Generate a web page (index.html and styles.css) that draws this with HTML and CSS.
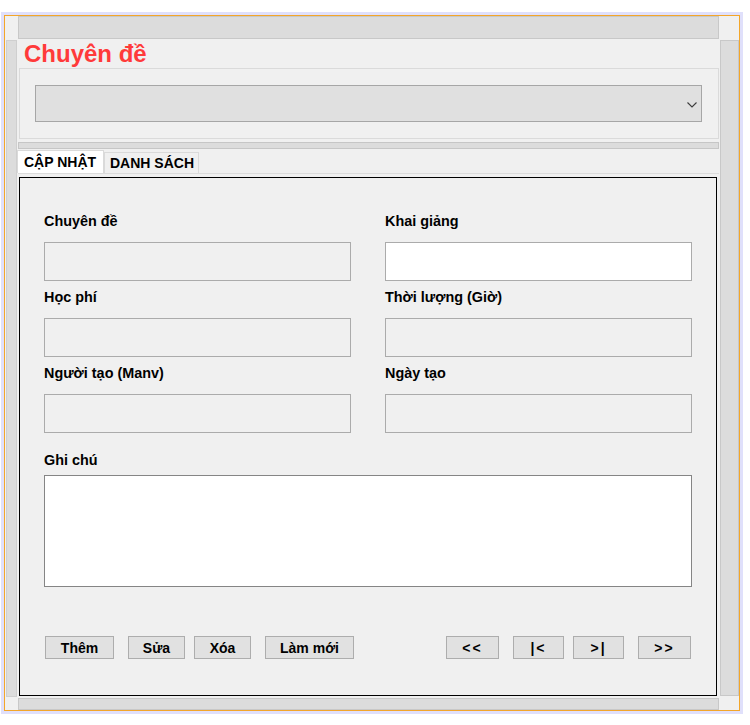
FILE: index.html
```html
<!DOCTYPE html>
<html lang="vi">
<head>
<meta charset="utf-8">
<title>Chuyên đề</title>
<link rel="stylesheet" href="styles.css">
</head>
<body>
<div class="frame">
  <div class="win">
    <div class="corner"></div>
    <div class="hbar top"></div>
    <div class="corner"></div>

    <div class="vstrip left"></div>
    <main class="main">
      <h1 class="title">Chuyên đề</h1>
      <div class="combo-panel">
        <div class="combo">
          <svg class="chev" width="10" height="6" viewBox="0 0 10 6"><polyline points="0.5,0.5 5,5 9.5,0.5" fill="none" stroke="#3c3c3c" stroke-width="1.1"/></svg>
        </div>
      </div>
      <div class="sep"></div>
      <div class="tabs">
        <div class="tab active">CẬP NHẬT</div>
        <div class="tab">DANH SÁCH</div>
      </div>
      <div class="tab-body">
        <div class="panel">
          <div class="grid">
            <div class="field">
              <label class="lbl">Chuyên đề</label>
              <div class="input"></div>
            </div>
            <div class="field">
              <label class="lbl">Khai giảng</label>
              <div class="input white"></div>
            </div>
            <div class="field">
              <label class="lbl">Học phí</label>
              <div class="input"></div>
            </div>
            <div class="field">
              <label class="lbl">Thời lượng (Giờ)</label>
              <div class="input"></div>
            </div>
            <div class="field">
              <label class="lbl">Người tạo (Manv)</label>
              <div class="input"></div>
            </div>
            <div class="field">
              <label class="lbl">Ngày tạo</label>
              <div class="input"></div>
            </div>
          </div>
          <label class="lbl note-lbl">Ghi chú</label>
          <div class="note"></div>
          <div class="buttons">
            <button class="btn b-them">Thêm</button>
            <button class="btn b-sua">Sửa</button>
            <button class="btn b-xoa">Xóa</button>
            <button class="btn b-moi">Làm mới</button>
            <button class="btn b-first">&lt;&lt;</button>
            <button class="btn b-prev">|&lt;</button>
            <button class="btn b-next">&gt;|</button>
            <button class="btn b-last">&gt;&gt;</button>
          </div>
        </div>
      </div>
    </main>
    <div class="vstrip right"></div>

    <div class="corner"></div>
    <div class="hbar bottom"></div>
    <div class="corner"></div>
  </div>
</div>
</body>
</html>
```

FILE: styles.css
```css
* { box-sizing: border-box; }

body {
  margin: 0;
  background: #ffffff;
  font-family: "Liberation Sans", Arial, sans-serif;
  color: #000;
}

.frame {
  margin: 12px 0 0 1px;
  width: 742px;
  height: 702px;
  padding: 3px;
  background: #e0e0fb;
}

.win {
  width: 736px;
  height: 696px;
  border: 1px solid #f3a62a;
  background: #f0f0f0;
  display: grid;
  grid-template-columns: 13px 702px 19px;
  grid-template-rows: 24px 658px 12px;
}

.corner { background: #f0f0f0; }

.hbar {
  width: 701px;
  background: #dcdcdc;
  border: 1px solid #c8c8c8;
}
.hbar.top { height: 23px; }
.hbar.bottom { height: 12px; }

.vstrip {
  background: #dcdcdc;
  border: 1px solid #cfcfcf;
}
.vstrip.left { margin-left: 1px; width: 11px; height: 657px; }
.vstrip.right { width: 19px; height: 656px; border-color: #c8c8c8; }

.main {
  display: flex;
  flex-direction: column;
  min-width: 0;
}

.title {
  margin: 0;
  height: 28px;
  padding-left: 6px;
  font-size: 24px;
  line-height: 28px;
  font-weight: bold;
  color: #ff3a3a;
}

.combo-panel {
  margin-left: 1px;
  width: 700px;
  height: 71px;
  border: 1px solid #dadada;
  padding: 16px 0 0 15px;
}

.combo {
  width: 667px;
  height: 37px;
  background: #e0e0e0;
  border: 1px solid #a6a6a6;
  display: flex;
  align-items: center;
  justify-content: flex-end;
  padding-right: 4px;
}
.chev { display: block; margin-top: 2px; }

.sep {
  margin-top: 3px;
  width: 701px;
  height: 7px;
  background: #dcdcdc;
  border: 1px solid #c6c6c6;
}

.tabs {
  margin-top: 1px;
  margin-left: -1px;
  display: flex;
  align-items: flex-end;
  height: 23px;
}

.tab {
  height: 21px;
  width: 95px;
  padding-left: 5px;
  font-size: 14px;
  font-weight: bold;
  line-height: 20px;
  background: #f0f0f0;
  border: 1px solid #dadada;
  border-bottom: none;
  white-space: nowrap;
}
.tab.active {
  height: 23px;
  width: 87px;
  padding-left: 6px;
  line-height: 23px;
  background: #ffffff;
}

.tab-body {
  width: 701px;
  border-top: 1px solid #dcdcdc;
  padding-top: 3px;
}

.panel {
  margin-left: 1px;
  width: 698px;
  height: 519px;
  border: 1px solid #000;
  padding: 35px 0 0 24px;
}

.grid {
  display: grid;
  grid-template-columns: 307px 307px;
  column-gap: 34px;
}

.field {
  display: flex;
  flex-direction: column;
  padding-bottom: 8px;
}

.lbl {
  display: block;
  font-size: 14.4px;
  font-weight: bold;
  line-height: 17px;
  height: 17px;
  white-space: nowrap;
}

.input {
  margin-top: 12px;
  height: 39px;
  background: #f0f0f0;
  border: 1px solid #ababab;
}
.input.white { background: #ffffff; }

.note-lbl { margin-top: 11px; }

.note {
  margin-top: 6px;
  width: 648px;
  height: 112px;
  background: #ffffff;
  border: 1px solid #858585;
}

.buttons {
  margin-top: 49px;
  margin-left: 1px;
  display: flex;
}

.btn {
  height: 23px;
  padding: 0;
  background: #e1e1e1;
  border: 1px solid #adadad;
  font-family: "Liberation Sans", Arial, sans-serif;
  font-size: 14px;
  font-weight: bold;
  color: #000;
  line-height: 20px;
  text-align: center;
}

.b-them { width: 69px; }
.b-sua { width: 57px; margin-left: 14px; }
.b-xoa { width: 57px; margin-left: 9px; }
.b-moi { width: 89px; margin-left: 14px; }
.b-first { width: 53px; margin-left: 92px; letter-spacing: 2px; }
.b-prev { width: 51px; margin-left: 14px; letter-spacing: 2px; }
.b-next { width: 51px; margin-left: 9px; letter-spacing: 2px; }
.b-last { width: 53px; margin-left: 14px; letter-spacing: 2px; }
```
